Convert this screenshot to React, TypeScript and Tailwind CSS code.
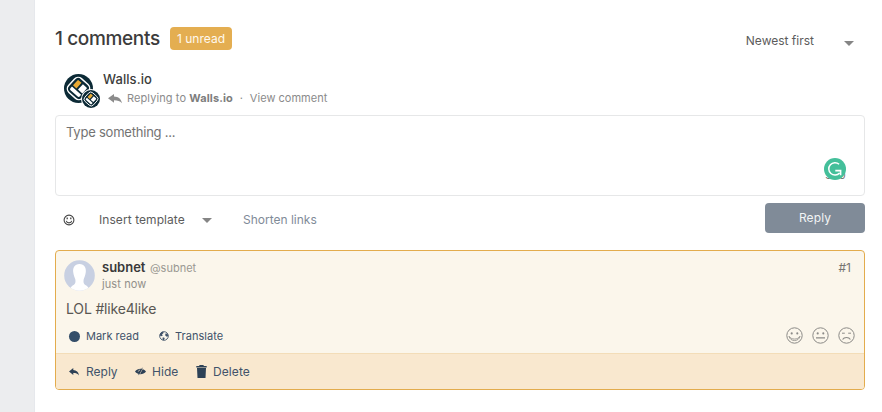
import React from 'react';

function WallsLogo({ className }: { className: string }) {
  return (
    <svg viewBox="0 0 30 30" className={className}>
      <circle cx="15" cy="15" r="15" fill="#0c2a36" />
      <g transform="rotate(42 15 15)">
        <rect x="5.4" y="5.4" width="19.2" height="19.2" rx="5" fill="none" stroke="#fff" strokeWidth="1.5" />
        <path d="M8.6 9.6Q8.6 8.6 9.6 8.6H13.4V16.4H8.6Z" fill="#e9aa35" />
        <path d="M15.4 8.6H20.4Q21.4 8.6 21.4 9.6V16.2H15.4Z" fill="#fff" />
        <path d="M8.6 18H21.4V20.4Q21.4 21.8 20 21.8H10Q8.6 21.8 8.6 20.4Z" fill="#fff" />
      </g>
    </svg>
  );
}

function ReplyArrow({ className }: { className: string }) {
  return (
    <svg viewBox="0 0 14 11" className={className} fill="currentColor" preserveAspectRatio="none">
      <path d="M0 4.8 6 0V2.8C10.5 3 13.2 5.5 14 10.2C12 7.6 9.8 6.8 6 6.8V9.6Z" />
    </svg>
  );
}

function Caret({ className }: { className: string }) {
  return (
    <svg viewBox="0 0 10 5" className={`h-[5px] w-[10px] text-[#858585] ${className}`} fill="currentColor">
      <path d="M0 0H10L5 5Z" />
    </svg>
  );
}

function Face({ mood }: { mood: 'happy' | 'neutral' | 'sad' }) {
  return (
    <svg viewBox="0 0 17 17" className="size-[17px] text-[#8b8a87]" fill="none" stroke="currentColor" strokeWidth="1">
      <circle cx="8.5" cy="8.5" r="7.7" />
      {mood === 'sad' ? (
        <path d="M4 6.2H6.8M10.2 6.2H13" />
      ) : (
        <g fill="currentColor" stroke="none">
          <circle cx="5.7" cy="6.4" r="1.05" />
          <circle cx="11.3" cy="6.4" r="1.05" />
        </g>
      )}
      {mood === 'happy' && <path d="M3 9.2C4 15 13 15 14 9.2C12 13 5 13 3 9.2Z" strokeWidth=".8" />}
      {mood === 'neutral' && <path d="M4 10.9H13" strokeWidth="1.1" />}
      {mood === 'sad' && <path d="M4.6 12.5C6.2 9.8 10.8 9.8 12.4 12.5" strokeWidth="1.1" />}
    </svg>
  );
}

export default function App() {
  return (
    <div className="flex h-[412px] w-[882px] overflow-hidden bg-white font-['Inter','Liberation_Sans',sans-serif] whitespace-nowrap text-[#5c5c5c]">
      <aside className="w-[35px] shrink-0 border-r border-[#e6e8ec] bg-[#ecedef]" />
      <main className="ml-5 flex w-[810px] flex-col">
        <header className="mt-[27px] flex h-[23px] items-center">
          <h1 className="w-[115px] text-[19px] leading-[23px] font-medium tracking-[-0.35px] text-[#3c3c3c]">1 comments</h1>
          <span className="flex h-[23px] w-[62px] items-center justify-center rounded bg-[#e4ae51] pt-px text-[12px] text-[#fff9ed]">1 unread</span>
          <div className="mt-[5px] ml-auto flex items-center">
            <span className="text-[12px]">Newest first</span>
            <Caret className="mt-[5px] mr-[11px] ml-[30px]" />
          </div>
        </header>

        <section className="mt-[23px] flex h-[42px]">
          <div className="relative ml-[9px] w-[39px] shrink-0">
            <WallsLogo className="mt-px size-[29px]" />
            <div className="absolute top-[16px] left-[17px] size-[20px] rounded-full bg-white p-px">
              <WallsLogo className="size-[18px]" />
            </div>
          </div>
          <div className="flex flex-col">
            <span className="-mt-[2px] h-[17px] text-[13px] leading-[17px] font-medium tracking-[0.08px] text-[#3c3c3c]">Walls.io</span>
            <div className="mt-[2px] flex h-[17px] items-center text-[11px] text-[#8b8b8b]">
              <ReplyArrow className="mr-[5px] ml-[5px] h-[10px] w-[14px]" />
              <span className="tracking-[0.1px]">Replying to <b className="font-bold text-[#7d7d7d]">Walls.io</b></span>
              <span className="ml-[7px] w-[10px]">·</span>
              <span className="tracking-[0.02px]">View comment</span>
            </div>
          </div>
        </section>

        <div className="flex h-[81px] justify-between rounded border border-[#e6e7e8] pr-[17px] pl-[10px]">
          <span className="mt-[7px] text-[13px] leading-[18px] tracking-[-0.22px] text-[#737373]">Type something ...</span>
          <div className="relative mt-[42px] size-[23px]">
            <span className="absolute top-[9px] left-[1px] text-[11px] text-[#777]">500</span>
            <svg viewBox="0 0 22 22" className="absolute top-0 left-0 size-[22px]">
              <circle cx="11" cy="11" r="11" fill="#44bf9a" />
              <path d="M15.1 6.2A6.2 6.2 0 1 0 15.6 15" fill="none" stroke="#fff" strokeWidth="1.5" />
              <path d="M11.3 12.6H16.6V17.2" fill="none" stroke="#fff" strokeWidth="1.6" />
            </svg>
          </div>
        </div>

        <div className="mt-[7px] flex h-[30px] items-center text-[12px]">
          <svg viewBox="0 0 12 12" className="mt-[4px] ml-[8px] size-[12px] text-[#444]" fill="none" stroke="currentColor" strokeWidth="1.1">
            <circle cx="6" cy="6" r="4.9" />
            <path d="M3.3 6.8C3.9 9.5 8.1 9.5 8.7 6.8" />
            <path d="M4.2 3.6V5.2M7.8 3.6V5.2" strokeWidth="1.3" />
          </svg>
          <span className="mt-[4px] ml-[24px] w-[103px] tracking-[0.07px]">Insert template</span>
          <Caret className="mt-[5px]" />
          <span className="mt-[4px] ml-[31px] text-[#7f8b98]">Shorten links</span>
          <button className="ml-auto h-[30px] w-[100px] rounded bg-[#808b98] text-[12px] tracking-[0.1px] text-[#f2f4f5]">Reply</button>
        </div>

        <article className="mt-[17px] flex h-[140px] flex-col overflow-hidden rounded border border-[#e3ac4d] bg-[#fbf6eb]">
          <div className="flex h-[102px] flex-col">
            <div className="flex h-[42px]">
              <svg viewBox="0 0 31 31" className="mt-[9px] ml-[8px] size-[31px]">
                <defs>
                  <clipPath id="avatar-circle"><circle cx="15.5" cy="15.5" r="15.3" /></clipPath>
                </defs>
                <g clipPath="url(#avatar-circle)">
                  <rect width="31" height="31" fill="#c8d0e2" />
                  <path d="M15.5 4C10.5 4 8.8 8 9.2 12C9.5 15.5 10.8 17.5 11.3 19.3C11.8 22.5 11.4 24.5 8 26L4 31H27L23 26C19.6 24.5 19.2 22.5 19.7 19.3C20.2 17.5 21.5 15.5 21.8 12C22.2 8 20.5 4 15.5 4Z" fill="#fff" />
                </g>
              </svg>
              <div className="mt-[8px] ml-[7px] flex flex-col">
                <div className="flex h-[17px] items-center">
                  <span className="w-[48px] text-[13px] font-semibold text-[#393939]">subnet</span>
                  <span className="pt-px text-[11px] text-[#9a9892]">@subnet</span>
                </div>
                <span className="h-[16px] text-[11px] leading-[17px] tracking-[0.1px] text-[#92908a]">just now</span>
              </div>
              <span className="mt-[8px] mr-[13px] ml-auto text-[12px] leading-[17px] text-[#777571]">#1</span>
            </div>
            <p className="mt-[7px] ml-[10px] h-[18px] text-[14px] leading-[18px] tracking-[-0.17px] text-[#595753]">LOL #like4like</p>
            <div className="mt-[9px] flex h-[18px] items-center text-[11px] text-[#41536a]">
              <i className="ml-[13px] size-[11px] rounded-full bg-[#344e69]" />
              <span className="ml-[6px] w-[73px]">Mark read</span>
              <svg viewBox="0 0 10 10" className="size-[10px]">
                <circle cx="5" cy="5" r="4.3" fill="#fbf6eb" stroke="#41536a" strokeWidth=".9" />
                <path d="M1 3C2 1 3.2 .6 4.6 1L4.2 2.4 3 3.2 3.8 4.5 2.4 5.2 .8 4.4ZM6.4 2.4 8.6 2.8 9.3 5 7.8 5.8 6.2 4.6ZM3.8 6.2 5.8 7 4.8 9.2 3.4 8.6Z" fill="#41536a" />
              </svg>
              <span className="ml-[6px] tracking-[0.04px]">Translate</span>
              <div className="mt-[-1px] mr-[9.5px] ml-auto flex gap-[9px]">
                <Face mood="happy" />
                <Face mood="neutral" />
                <Face mood="sad" />
              </div>
            </div>
          </div>
          <footer className="flex h-[36px] grow items-center border-t border-[#f3ddb8] bg-[#f9e8cf] text-[12px] text-[#41536a]">
            <ReplyArrow className="ml-[13px] h-[8px] w-[10px] text-[#2d4156]" />
            <span className="ml-[7px] w-[49px]">Reply</span>
            <svg viewBox="0 0 11 9" className="h-[9px] w-[11px] text-[#2d4156]">
              <path d="M0 4.5C2.8.9 8.2.9 11 4.5C8.2 8.1 2.8 8.1 0 4.5Z" fill="currentColor" />
              <path d="M3.2 4.7A2.3 2.3 0 0 1 5.2 2.9" fill="none" stroke="#f9e8cf" strokeWidth=".7" />
              <path d="M7.9 1 4.2 8" stroke="#f9e8cf" strokeWidth=".7" />
              <path d="M7.4.8 3.5 8.1" stroke="currentColor" strokeWidth=".7" />
            </svg>
            <span className="ml-[6px] w-[44px] tracking-[0.05px]">Hide</span>
            <svg viewBox="0 0 11 13" className="h-[13px] w-[11px] text-[#2d4156]" fill="currentColor">
              <path d="M.3 1H3L3.7 0H7.3L8 1H10.7V2.6H.3ZM1 3.1H10L9.5 13H1.5Z" />
            </svg>
            <span className="ml-[6px] tracking-[0.1px]">Delete</span>
          </footer>
        </article>
      </main>
    </div>
  );
}
